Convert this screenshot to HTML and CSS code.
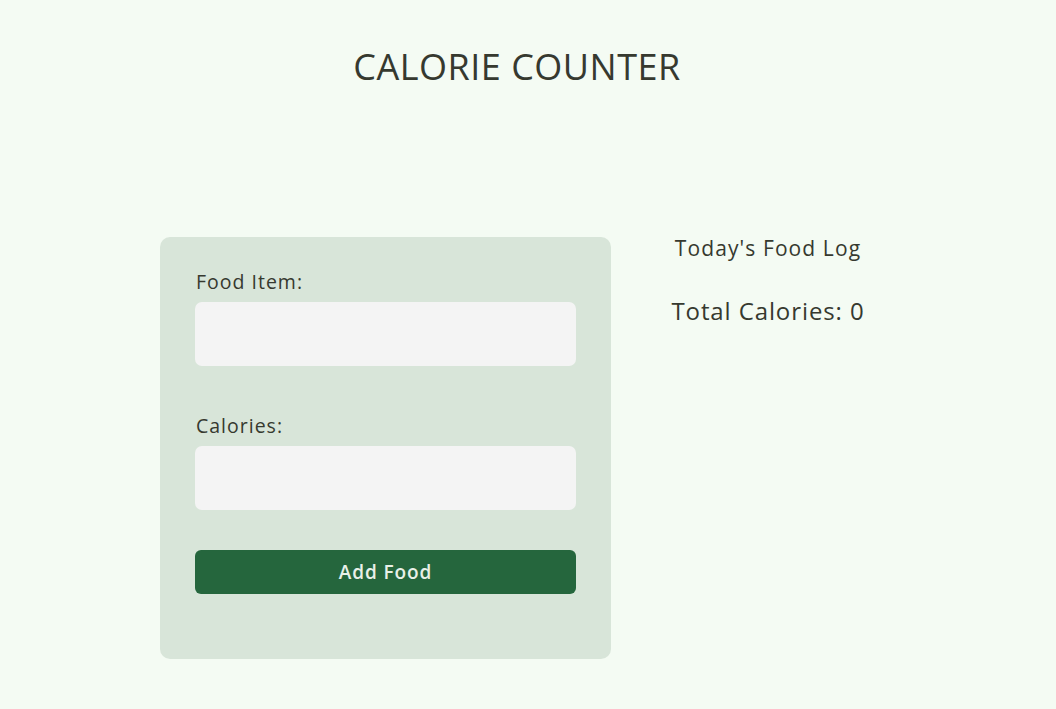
FILE: index.html
```html
<!DOCTYPE html>
<html lang="en">
<head>
<meta charset="utf-8">
<title>Calorie Counter</title>
<link rel="stylesheet" href="styles.css">
</head>
<body>
  <h1 class="title">CALORIE COUNTER</h1>
  <main class="layout">
    <form class="card">
      <label class="label" for="food">Food Item:</label>
      <input class="field" id="food" type="text">
      <label class="label label-gap" for="cal">Calories:</label>
      <input class="field" id="cal" type="number">
      <button class="btn" type="button">Add Food</button>
    </form>
    <section class="log">
      <h2 class="log-title">Today's Food Log</h2>
      <p class="total">Total Calories: 0</p>
    </section>
  </main>
</body>
</html>
```
FILE: styles.css
```css
* { box-sizing: border-box; }
html, body { margin: 0; padding: 0; }
body {
  background: #f4fbf3;
  font-family: "Open Sans", "DejaVu Sans", sans-serif;
  color: #36392f;
  width: 1056px;
  height: 709px;
  overflow: hidden;
}
.title {
  margin: 0;
  padding-top: 42px;
  text-align: center;
  font-weight: 400;
  font-size: 36px;
  line-height: 50px;
  letter-spacing: 0.5px;
  padding-right: 22px;
}
.layout {
  display: flex;
  align-items: flex-start;
  padding-left: 160px;
  margin-top: 145px;
  gap: 37px;
}
.card {
  width: 451px;
  height: 422px;
  background: #d8e5d9;
  border-radius: 10px;
  padding: 32px 35px 0;
  display: flex;
  flex-direction: column;
}
.label {
  font-size: 19.5px;
  line-height: 26px;
  letter-spacing: 1px;
  color: #36392f;
  margin-bottom: 7px;
  padding-left: 1px;
}
.label-gap { margin-top: 47px; }
.field {
  height: 64px;
  border: none;
  border-radius: 7px;
  background: #f4f4f4;
  outline: none;
  font: inherit;
}
.btn {
  margin-top: 40px;
  height: 44px;
  border: none;
  border-radius: 6px;
  background: #25663d;
  color: #e8f0e8;
  font-family: inherit;
  font-size: 19px;
  font-weight: 600;
  letter-spacing: 0.9px;
}
.log {
  width: 240px;
  text-align: center;
}
.log-title {
  margin: 0;
  font-size: 21px;
  font-weight: 400;
  line-height: 22px;
  letter-spacing: 1.1px;
  color: #36392f;
}
.total {
  margin: 39px 0 0;
  font-size: 24px;
  line-height: 26px;
  letter-spacing: 0.9px;
  color: #36392f;
}
```
